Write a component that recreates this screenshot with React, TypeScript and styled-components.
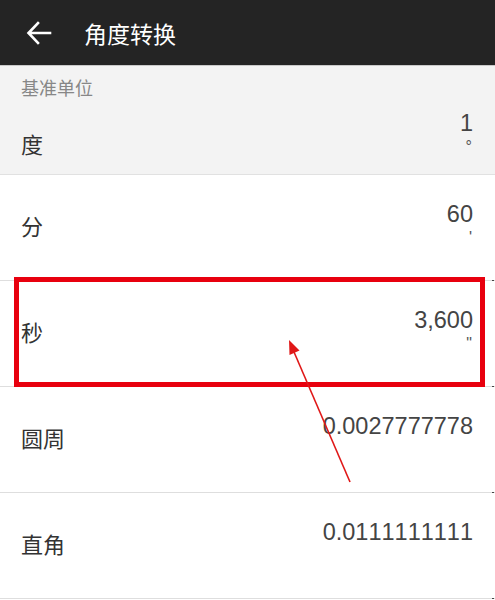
import React from "react";
import styled, { createGlobalStyle } from "styled-components";

const Global = createGlobalStyle`
  html, body { margin: 0; padding: 0; background: #ffffff; }
  body { font-family: "Noto Sans CJK SC", "Liberation Sans", sans-serif; }
`;

const Page = styled.div`
  position: relative;
  width: 495px;
  height: 600px;
  overflow: hidden;
  background: #ffffff;
`;

const Header = styled.header`
  height: 65px;
  background: #242424;
  border-bottom: 1px solid #c9c9c9;
  display: flex;
  align-items: center;
  padding-left: 26px;
  gap: 32px;
  box-sizing: content-box;
`;

const Title = styled.h1`
  margin: 0;
  font-family: "Noto Sans CJK SC", sans-serif;
  font-weight: 400;
  font-size: 23px;
  line-height: 28px;
  color: #ffffff;
`;

const BaseSection = styled.section`
  background: #f3f3f3;
  border-bottom: 1px solid #e1e1e1;
  height: 109px;
  box-sizing: border-box;
  padding-top: 10px;
`;

const Caption = styled.div`
  padding-left: 21px;
  font-size: 18px;
  line-height: 22px;
  color: #878787;
`;

const Row = styled.div<{ $base?: boolean }>`
  position: relative;
  display: flex;
  justify-content: space-between;
  align-items: ${(p) => (p.$base ? "flex-start" : "center")};
  height: ${(p) => (p.$base ? "77px" : "105px")};
  padding: 0 22px 0 21px;
  box-sizing: content-box;
  border-bottom: ${(p) => (p.$base ? "none" : "1px solid #dedede")};
  &::after {
    content: "";
    display: ${(p) => (p.$base ? "none" : "block")};
    position: absolute;
    right: 1px;
    bottom: -1px;
    width: 2px;
    height: 1px;
    background: #444;
  }
`;

const Label = styled.div<{ $base?: boolean }>`
  font-size: 22px;
  line-height: 26px;
  color: #333333;
  margin-top: ${(p) => (p.$base ? "32px" : "0")};
  margin-bottom: ${(p) => (p.$base ? "0" : "6px")};
`;

const ValueCol = styled.div<{ $base?: boolean }>`
  display: flex;
  flex-direction: column;
  align-items: flex-end;
  align-self: flex-start;
  padding-top: ${(p) => (p.$base ? "12px" : "26px")};
  gap: 2px;
`;

const Value = styled.div`
  font-family: "Liberation Sans", Arial, sans-serif;
  font-size: 23.5px;
  line-height: 26px;
  color: #444444;
  font-variant-numeric: tabular-nums;
  font-kerning: none;
  letter-spacing: 0;
`;

const Unit = styled.div`
  font-family: "Liberation Sans", Arial, sans-serif;
  font-size: 16px;
  line-height: 18px;
  color: #555555;
  padding-right: 1px;
`;

const Highlight = styled.div`
  position: absolute;
  left: 14px;
  top: 277px;
  width: 471px;
  height: 110px;
  box-sizing: border-box;
  border: 5px solid #e8000e;
  pointer-events: none;
`;

const Overlay = styled.svg`
  position: absolute;
  left: 0;
  top: 0;
  pointer-events: none;
`;

const BackIcon = () => (
  <svg width="26" height="24" viewBox="0 0 26 24" fill="none">
    <path
      d="M24 12H3M12 2L2.5 12L12 22"
      stroke="#ffffff"
      strokeWidth="2.6"
      strokeLinecap="square"
    />
  </svg>
);

const rows = [
  { label: "分", value: "60", unit: "'" },
  { label: "秒", value: "3,600", unit: '"' },
  { label: "圆周", value: "0.0027777778", unit: "" },
  { label: "直角", value: "0.0111111111", unit: "" },
];

export default function App() {
  return (
    <Page>
      <Global />
      <Header>
        <BackIcon />
        <Title>角度转换</Title>
      </Header>
      <BaseSection>
        <Caption>基准单位</Caption>
        <Row $base>
          <Label $base>度</Label>
          <ValueCol $base>
            <Value>1</Value>
            <Unit>°</Unit>
          </ValueCol>
        </Row>
      </BaseSection>
      {rows.map((r) => (
        <Row key={r.label}>
          <Label>{r.label}</Label>
          <ValueCol>
            <Value>{r.value}</Value>
            <Unit>{r.unit || "\u00a0"}</Unit>
          </ValueCol>
        </Row>
      ))}
      <Highlight />
      <Overlay width="495" height="600" viewBox="0 0 495 600">
        <line x1="350" y1="482" x2="294" y2="352" stroke="#e01818" strokeWidth="1.6" />
        <polygon points="289,340 299.5,350.5 289.5,355" fill="#e01818" />
      </Overlay>
    </Page>
  );
}
